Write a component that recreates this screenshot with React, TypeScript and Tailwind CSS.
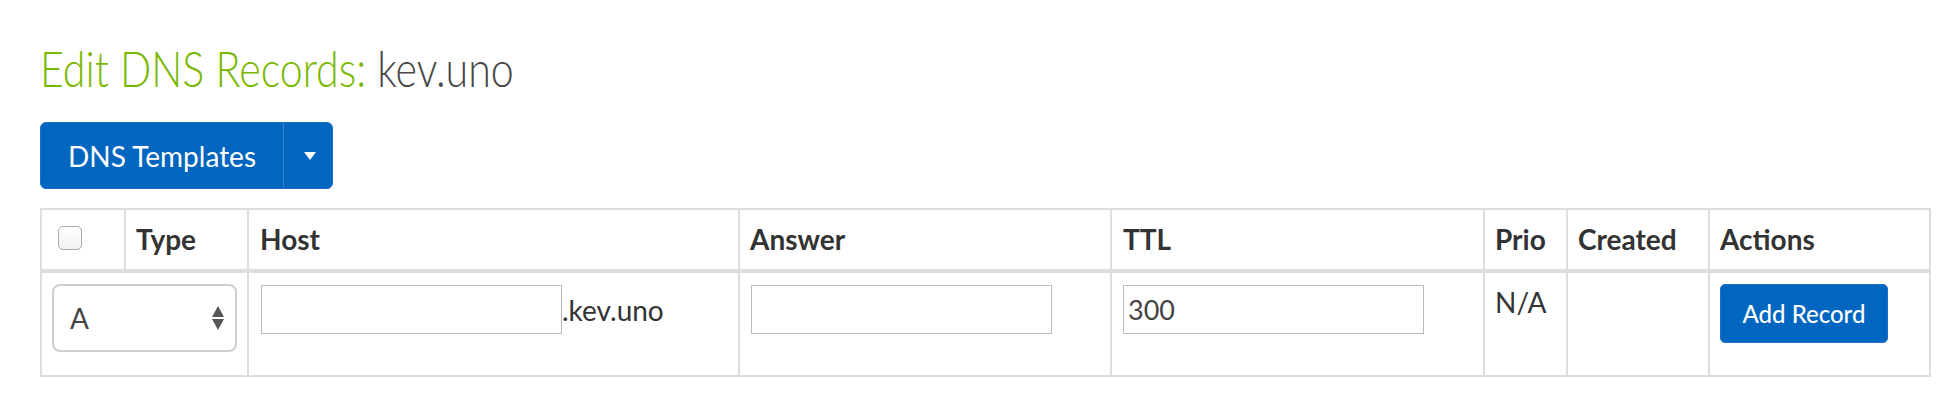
const cols = "grid grid-cols-[84px_123px_491px_372px_373px_83px_142px_219px]";
const cell = "border-r-2 border-[#ddd] pl-[10px]";

function SelectArrows() {
  return (
    <svg width="12" height="24" viewBox="0 0 12 24" className="fill-[#555]">
      <path d="M6 0 L12 11 L0 11 Z" />
      <path d="M0 13 L12 13 L6 24 Z" />
    </svg>
  );
}

function TextBox({ value, width = "w-[301px]" }: { value?: string; width?: string }) {
  return (
    <div
      className={`${width} flex h-[49px] items-center border border-[#bbb] bg-white pl-[4px] text-[27px] text-[#444]`}
    >
      {value}
    </div>
  );
}

export default function App() {
  return (
    <div
      className="min-h-[410px] w-full bg-white pl-[40px] text-[#333]"
      style={{ fontFamily: "Lato, 'Liberation Sans', sans-serif" }}
    >
      <h1 className="pt-[44px] text-[49px] leading-[49px] font-light">
        <span className="inline-block origin-left scale-x-[0.84] whitespace-nowrap">
          <span className="text-[#7ab800]">Edit DNS Records:</span>{" "}
          <span className="text-[#474747]">kev.uno</span>
        </span>
      </h1>

      <div className="mt-[29px] flex h-[67px] w-[293px] overflow-hidden rounded-[6px] border border-[#1a6ec3] bg-[#0066bf] text-white">
        <div className="flex w-[242px] items-center justify-center text-[28px]">DNS Templates</div>
        <div className="flex flex-1 items-center justify-center border-l border-[#3a82cc] pl-[4px]">
          <svg width="12" height="8" viewBox="0 0 12 8" className="fill-white">
            <path d="M0 0 L12 0 L6 8 Z" />
          </svg>
        </div>
      </div>

      <div className="mt-[19px] w-[1891px] border-2 border-[#ddd]">
        <div className={`${cols} h-[63px] border-b-4 border-[#ddd] text-[28px] font-bold leading-[38px]`}>
          <div className={`${cell} flex items-start pt-[16px] pl-[16px]`}>
            <div className="h-[24px] w-[24px] rounded-[5px] border border-[#aaa] bg-gradient-to-b from-white to-[#f2f2f2]" />
          </div>
          <div className={`${cell} pt-[10px]`}>Type</div>
          <div className={`${cell} pt-[10px] pl-[11px]`}>Host</div>
          <div className={`${cell} pt-[10px]`}>Answer</div>
          <div className={`${cell} pt-[10px] pl-[11px]`}>TTL</div>
          <div className={`${cell} pt-[10px]`}>Prio</div>
          <div className={`${cell} pt-[10px]`}>Created</div>
          <div className="pt-[10px] pl-[10px]">Actions</div>
        </div>

        <div className="grid h-[102px] grid-cols-[207px_491px_372px_373px_83px_142px_219px] text-[28px] leading-[38px]">
          <div className={`${cell} pt-[11px]`}>
            <div className="flex h-[68px] w-[185px] items-center justify-between rounded-[8px] border-2 border-[#cfcfcf] bg-white pr-[11px] pl-[16px] text-[28px] text-[#444]">
              <span>A</span>
              <SelectArrows />
            </div>
          </div>
          <div className={`${cell} pt-[12px] pl-[12px]`}>
            <div className="flex items-center">
              <TextBox />
              <span className="text-[#333]">.kev.uno</span>
            </div>
          </div>
          <div className={`${cell} pt-[12px] pl-[11px]`}>
            <TextBox />
          </div>
          <div className={`${cell} pt-[12px] pl-[11px]`}>
            <TextBox value="300" />
          </div>
          <div className={`${cell} pt-[10px]`}>N/A</div>
          <div className={cell} />
          <div className="pt-[11px] pl-[10px]">
            <button className="h-[59px] w-[168px] rounded-[5px] border border-[#1a6ec3] bg-[#0066bf] text-[24px] font-medium text-white">
              Add Record
            </button>
          </div>
        </div>
      </div>
    </div>
  );
}
